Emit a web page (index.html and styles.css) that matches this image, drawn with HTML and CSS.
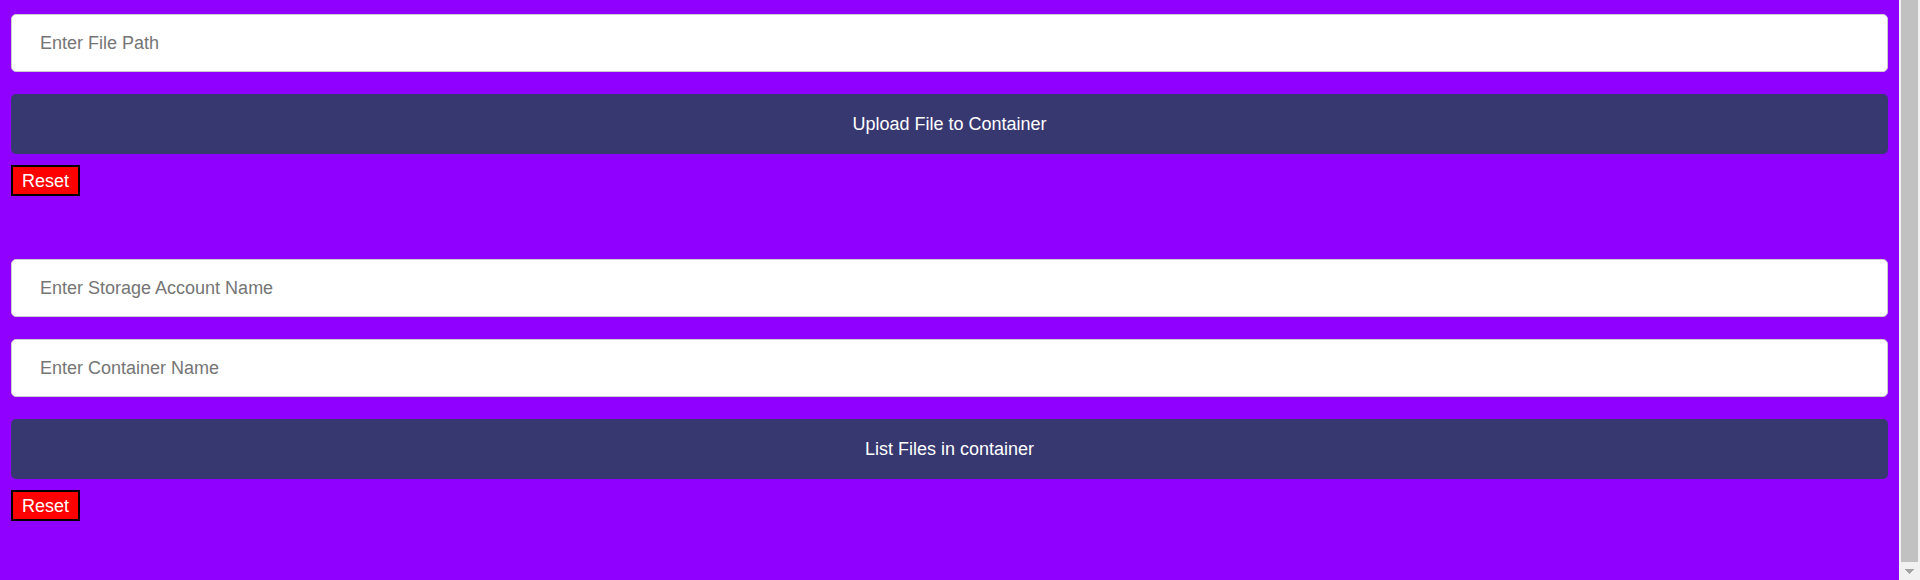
FILE: index.html
```html
<!DOCTYPE html>
<html lang="en">
<head>
<meta charset="utf-8">
<title>Storage Container Files</title>
<link rel="stylesheet" href="styles.css">
</head>
<body>
<div class="viewport">
  <main class="content">
    <form class="panel">
      <input class="field" type="text" aria-label="File path" placeholder="Enter File Path">
      <button class="submit" type="submit">Upload File to Container</button>
      <button class="reset" type="reset">Reset</button>
    </form>
    <form class="panel">
      <input class="field" type="text" aria-label="Storage account name" placeholder="Enter Storage Account Name">
      <input class="field" type="text" aria-label="Container name" placeholder="Enter Container Name">
      <button class="submit" type="submit">List Files in container</button>
      <button class="reset" type="reset">Reset</button>
    </form>
  </main>
  <div class="scrollbar" aria-hidden="true">
    <div class="thumb"></div>
    <svg class="arrow" width="9" height="5" viewBox="0 0 9 5" shape-rendering="crispEdges"><path d="M0 0H9V1H8V2H7V3H6V4H5V5H4V4H3V3H2V2H1V1H0Z" fill="#a3a3a3"/></svg>
  </div>
</div>
</body>
</html>
```
FILE: styles.css
```css
* {
  box-sizing: border-box;
}

html {
  background: #8f00ff;
}

body {
  margin: 0;
  font-family: "Liberation Sans", Arial, sans-serif;
  font-size: 18px;
}

.viewport {
  display: flex;
  min-height: 100vh;
}

.content {
  flex: 1;
  display: flex;
  flex-direction: column;
  gap: 63px;
  padding: 14px 11px;
}

.panel {
  display: flex;
  flex-direction: column;
}

.field {
  width: 100%;
  margin: 0 0 22px;
  padding: 18px 28px;
  border: 1px solid #ccc;
  border-radius: 5px;
  background: #fff;
  font: inherit;
  line-height: 20px;
}

.field::placeholder {
  color: #757575;
}

.submit {
  width: 100%;
  margin: 0 0 11px;
  padding: 20px 28px;
  border: none;
  border-radius: 5px;
  background: #383870;
  color: #fff;
  font: inherit;
  line-height: 20px;
}

.reset {
  align-self: flex-start;
  padding: 4px 9px 3px;
  border: 2px solid #000;
  background: #f00;
  color: #fff;
  font: inherit;
  line-height: 20px;
}

.scrollbar {
  width: 21px;
  display: flex;
  flex-direction: column;
  align-items: center;
  gap: 7px;
  padding: 0 2px 6px;
  background: #f1f1f1;
}

.thumb {
  flex: 1;
  width: 100%;
  background: #c1c1c1;
}
```
